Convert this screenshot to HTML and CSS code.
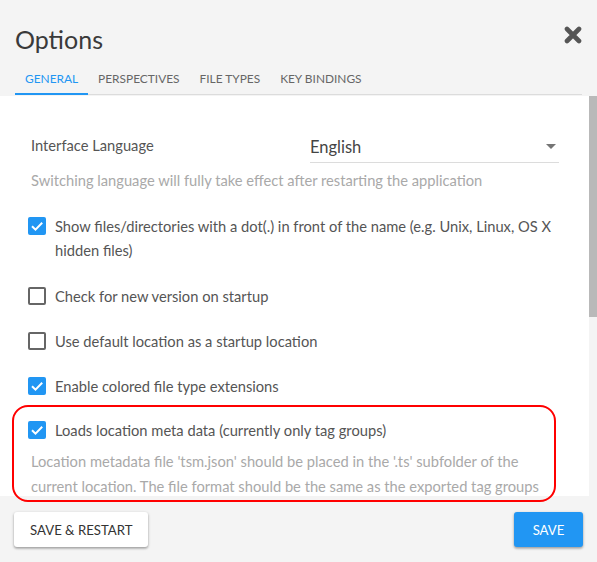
FILE: index.html
```html
<!DOCTYPE html>
<html>
<head>
<meta charset="utf-8">
<link rel="stylesheet" href="styles.css">
</head>
<body>
<div class="dialog">
  <div class="header">
    <div class="title-row">
      <h1 class="title">Options</h1>
      <svg class="close" viewBox="0 0 18 18" width="18" height="18"><path d="M3 3 L15 15 M15 3 L3 15" stroke="#555" stroke-width="4.6" stroke-linecap="round" fill="none"/></svg>
    </div>
    <div class="tabs">
      <div class="tab active">General</div>
      <div class="tab">Perspectives</div>
      <div class="tab">File Types</div>
      <div class="tab">Key Bindings</div>
    </div>
  </div>
  <div class="body">
    <div class="panel">
      <div class="lang-row">
        <div class="lang-label">Interface Language</div>
        <div class="select">
          <span>English</span>
          <svg class="caret" viewBox="0 0 10 5" width="10" height="5"><path d="M0 0 L10 0 L5 5 Z" fill="#757575"/></svg>
        </div>
      </div>
      <div class="helper first-helper">Switching language will fully take effect after restarting the application</div>

      <div class="check-row">
        <span class="box checked"><svg viewBox="0 0 18 18" width="18" height="18"><path d="M4 9.2 L7.5 12.6 L14.2 5.8" stroke="#fff" stroke-width="2" fill="none"/></svg></span>
        <span class="label">Show files/directories with a dot(.) in front of the name (e.g. Unix, Linux, OS X hidden files)</span>
      </div>
      <div class="check-row after-wrap">
        <span class="box"></span>
        <span class="label">Check for new version on startup</span>
      </div>
      <div class="check-row">
        <span class="box"></span>
        <span class="label">Use default location as a startup location</span>
      </div>
      <div class="check-row">
        <span class="box checked"><svg viewBox="0 0 18 18" width="18" height="18"><path d="M4 9.2 L7.5 12.6 L14.2 5.8" stroke="#fff" stroke-width="2" fill="none"/></svg></span>
        <span class="label">Enable colored file type extensions</span>
      </div>
      <div class="check-row tight">
        <span class="box checked"><svg viewBox="0 0 18 18" width="18" height="18"><path d="M4 9.2 L7.5 12.6 L14.2 5.8" stroke="#fff" stroke-width="2" fill="none"/></svg></span>
        <span class="label">Loads location meta data (currently only tag groups)</span>
      </div>
      <div class="helper meta-helper">Location metadata file 'tsm.json' should be placed in the '.ts' subfolder of the current location. The file format should be the same as the exported tag groups</div>
    </div>
    <div class="scrollbar"><div class="thumb"></div></div>
  </div>
  <div class="footer">
    <button class="btn">Save &amp; Restart</button>
    <button class="btn primary">Save</button>
  </div>
  <div class="highlight"></div>
</div>
</body>
</html>
```

FILE: styles.css
```css
* { box-sizing: border-box; }
html, body { margin: 0; padding: 0; }
body {
  background: #f4f4f4;
  font-family: Lato, "Noto Sans", sans-serif;
  color: #555;
  width: 597px;
  height: 562px;
  overflow: hidden;
}
.dialog {
  position: relative;
  display: flex;
  flex-direction: column;
  height: 562px;
}
.header {
  padding: 22px 15px 0 15px;
}
.title-row {
  display: flex;
  justify-content: space-between;
  align-items: flex-start;
}
.title {
  margin: 0;
  font-size: 25px;
  font-weight: 400;
  line-height: 34px;
  color: #3a3a3a;
}
.close {
  margin-top: 4px;
}
.tabs {
  display: flex;
  margin-top: 4px;
  border-bottom: 1px solid #dcdcdc;
  height: 35px;
}
.tab {
  padding: 0 10px;
  font-size: 11.9px;
  text-transform: uppercase;
  color: #666;
  line-height: 38px;
  height: 35px;
  border-bottom: 2px solid transparent;
}
.tab.active {
  color: #2196f3;
  border-bottom-color: #2196f3;
}
.body {
  display: flex;
  height: 400px;
  margin-top: 1px;
}
.panel {
  flex: 1;
  background: #fff;
  padding: 37px 30px 0 31px;
  overflow: hidden;
  font-size: 14.7px;
}
.scrollbar {
  width: 8px;
  background: #f4f4f4;
}
.thumb {
  height: 221px;
  background: #b9b9b9;
}
.lang-row {
  display: flex;
  align-items: flex-start;
}
.lang-label {
  width: 279px;
  line-height: 24px;
  color: #555;
}
.select {
  flex: 1;
  display: flex;
  justify-content: space-between;
  align-items: center;
  height: 30px;
  border-bottom: 1px solid #dcdcdc;
  font-size: 16.5px;
  color: #444;
  padding-bottom: 2px;
}
.caret { margin-right: 3px; }
.helper {
  color: #a9a9a9;
  line-height: 25px;
}
.first-helper { margin-top: 5px; }
.check-row {
  display: flex;
  align-items: flex-start;
  margin-top: 21px;
  line-height: 24px;
}
.check-row.after-wrap { margin-top: 22px; }
.check-row.tight { margin-top: 20px; }
.box {
  flex: none;
  width: 18px;
  height: 18px;
  margin: 3px 9px 0 -3px;
  border: 2px solid #666;
  border-radius: 2px;
  display: flex;
}
.box.checked {
  background: #2196f3;
  border: none;
}
.label { color: #555; }
.meta-helper { margin-top: 7px; }
.footer {
  flex: 1;
  display: flex;
  justify-content: space-between;
  align-items: flex-start;
  padding: 16px 14px 0 14px;
}
.btn {
  font-family: Lato, "Noto Sans", sans-serif;
  font-size: 13.2px;
  text-transform: uppercase;
  height: 35px;
  border: none;
  border-radius: 3px;
  background: #fff;
  color: #333;
  padding: 0 16px;
  min-width: 69px;
  box-shadow: 0 1px 3px rgba(0,0,0,0.3), 0 2px 2px rgba(0,0,0,0.12);
}
.btn.primary {
  background: #2196f3;
  color: #fff;
}
.highlight {
  position: absolute;
  left: 12px;
  top: 405px;
  width: 544px;
  height: 97px;
  border: 2px solid #f00;
  border-radius: 16px;
}
```
